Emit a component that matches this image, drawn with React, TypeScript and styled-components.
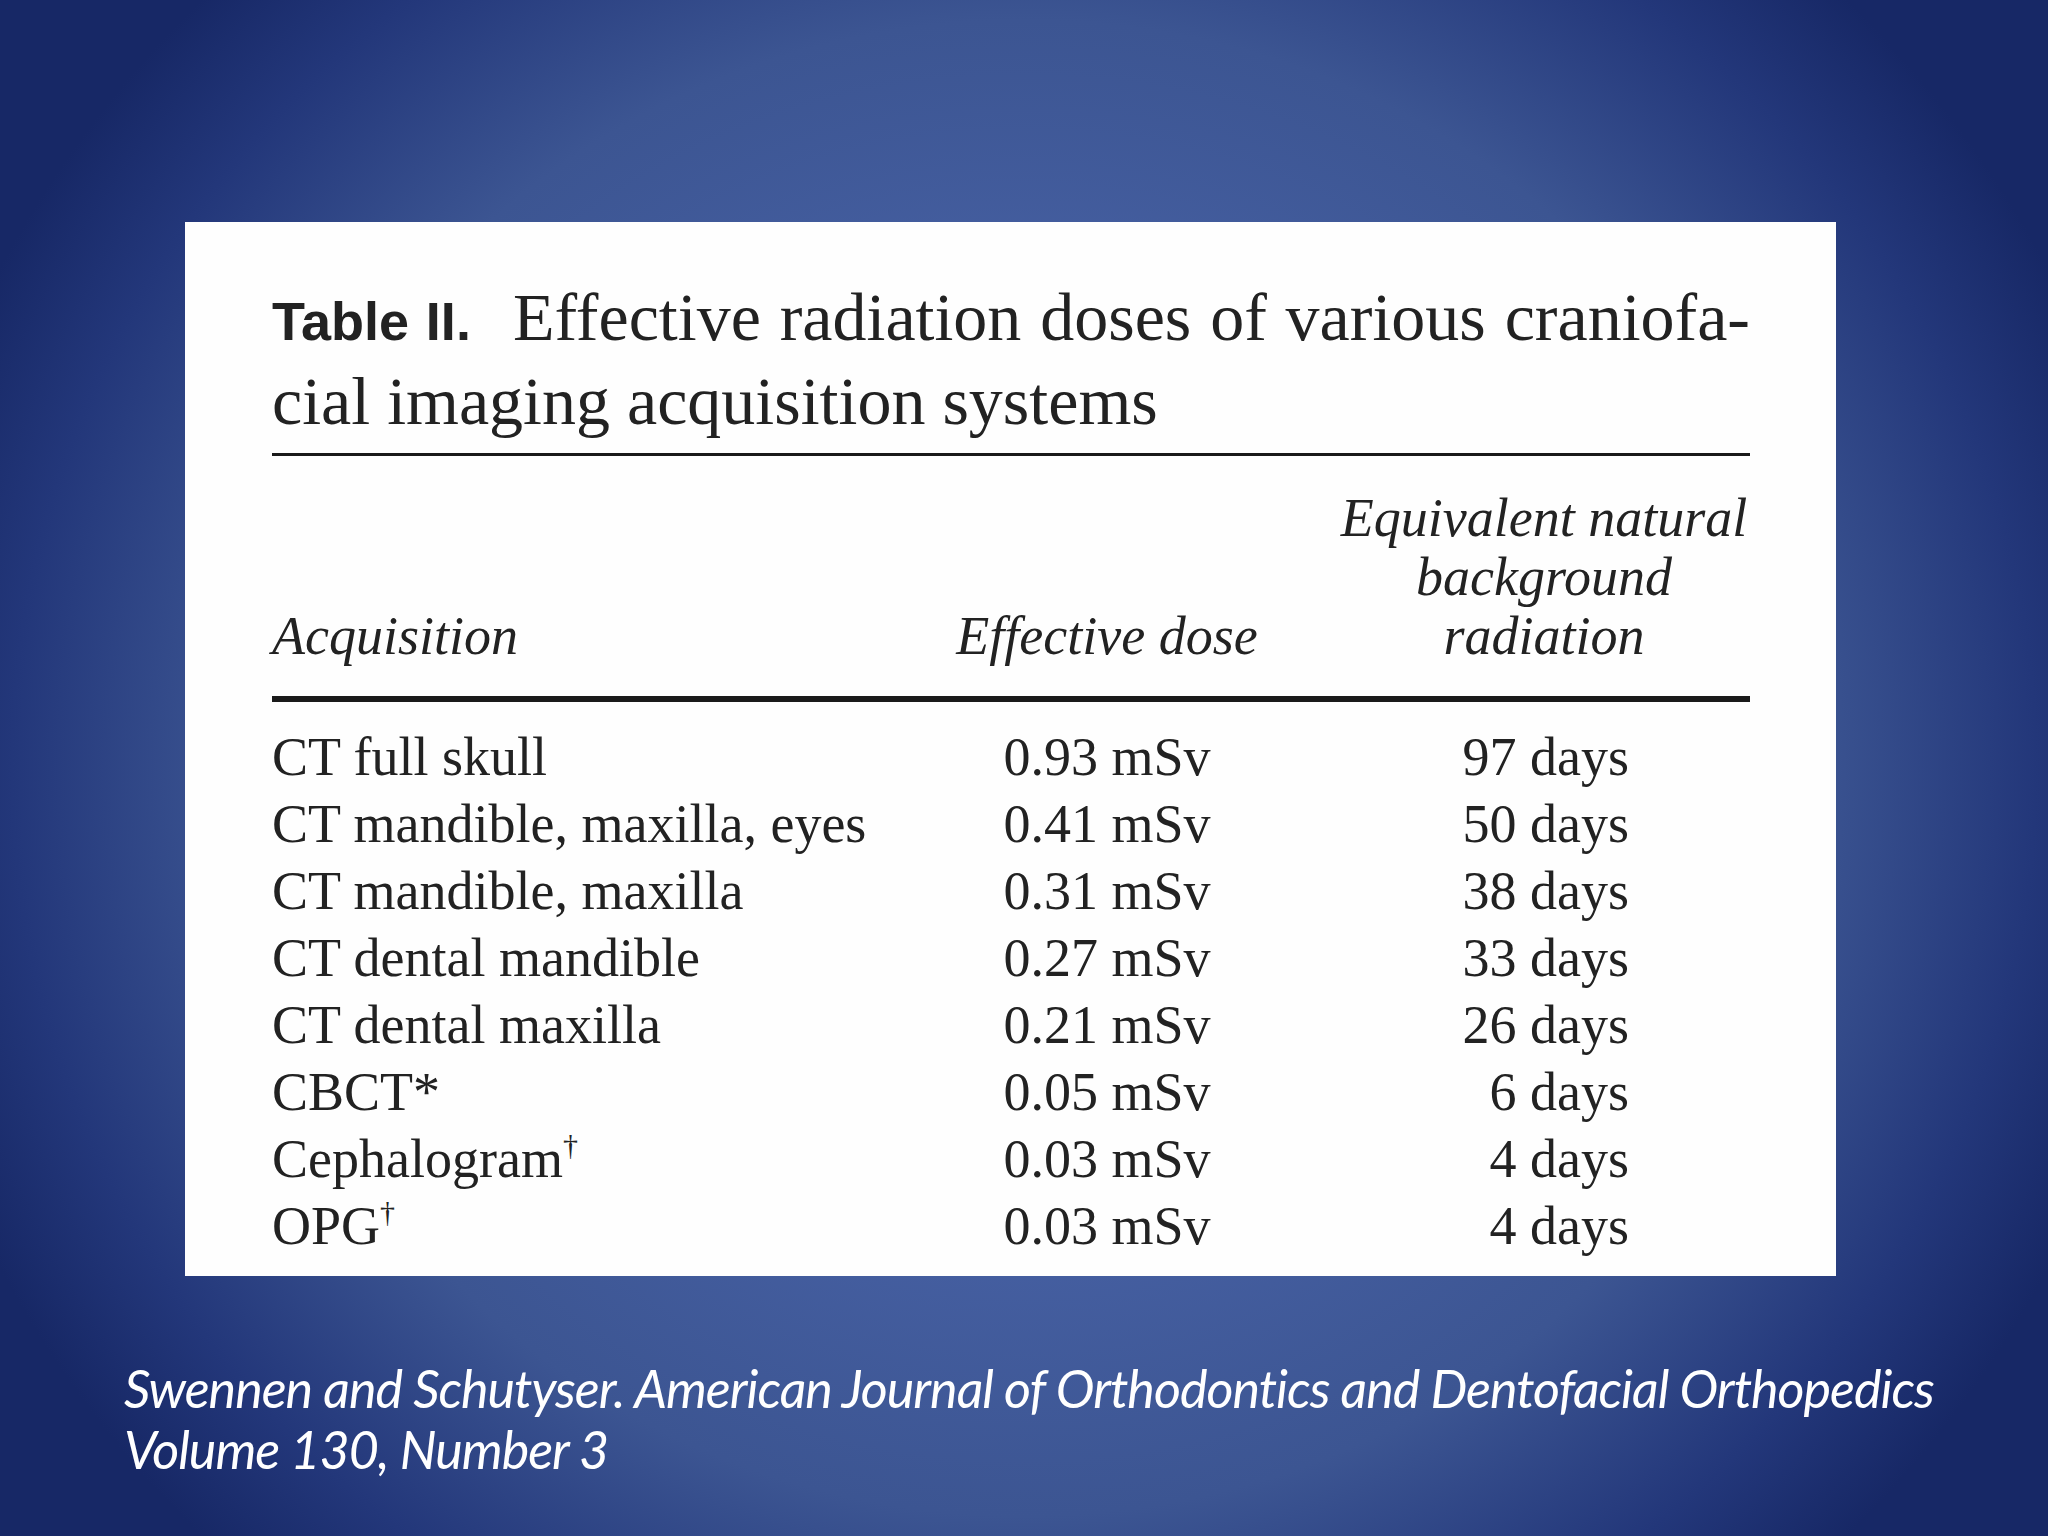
import React from "react";
import styled, { createGlobalStyle } from "styled-components";

const rows = [
  { name: "CT full skull", dose: "0.93 mSv", days: "97 days" },
  { name: "CT mandible, maxilla, eyes", dose: "0.41 mSv", days: "50 days" },
  { name: "CT mandible, maxilla", dose: "0.31 mSv", days: "38 days" },
  { name: "CT dental mandible", dose: "0.27 mSv", days: "33 days" },
  { name: "CT dental maxilla", dose: "0.21 mSv", days: "26 days" },
  { name: "CBCT*", dose: "0.05 mSv", days: "6 days" },
  { name: "Cephalogram", mark: "†", dose: "0.03 mSv", days: "4 days" },
  { name: "OPG", mark: "†", dose: "0.03 mSv", days: "4 days" },
];

const App = () => {
  return (
    <Slide>
      <GlobalStyle />
      <Card>
        <Title>
          <TitleLine justify>
            <Label>Table II.</Label>Effective radiation doses of various craniofa-
          </TitleLine>
          <TitleLine>cial imaging acquisition systems</TitleLine>
        </Title>
        <Rule />
        <Grid>
          <Head>Acquisition</Head>
          <Head align='center'>Effective dose</Head>
          <Head align='center'>
            Equivalent natural
            <br />
            background
            <br />
            radiation
          </Head>
        </Grid>
        <Rule thick />
        <Body>
          {rows.map((r) => (
            <React.Fragment key={r.name}>
              <Cell>
                {r.name}
                {r.mark && <Dagger>{r.mark}</Dagger>}
              </Cell>
              <Cell align='center'>{r.dose}</Cell>
              <Cell align='right' pad>
                {r.days}
              </Cell>
            </React.Fragment>
          ))}
        </Body>
      </Card>
      <Caption>
        Swennen and Schutyser. American Journal of Orthodontics and Dentofacial Orthopedics
        <br />
        Volume 130, Number 3
      </Caption>
    </Slide>
  );
};

export default App;

const GlobalStyle = createGlobalStyle`
  body {
    margin: 0;
    background: #1b2c6b;
  }
`;

const Slide = styled.div`
  width: 2048px;
  height: 1536px;
  box-sizing: border-box;
  padding-top: 222px;
  overflow: hidden;
  background: radial-gradient(
    ellipse 1150px 1100px at 50% 50%,
    #4d68ad 0%,
    #4862a6 35%,
    #3c5592 68%,
    #23377a 88%,
    #172866 100%
  );
`;

const Card = styled.div`
  margin-left: 185px;
  width: 1651px;
  height: 1054px;
  box-sizing: border-box;
  padding: 55px 86px 0 87px;
  background: #fefefe;
  color: #222;
  font-family: "Liberation Serif", "Times New Roman", serif;
`;

const Title = styled.div`
  font-size: 68px;
  line-height: 80px;
`;

const TitleLine = styled.div<{ justify?: boolean }>`
  text-align: ${(p) => (p.justify ? "justify" : "left")};
  text-align-last: ${(p) => (p.justify ? "justify" : "left")};
`;

const Label = styled.span`
  font-family: "Liberation Sans", Arial, sans-serif;
  font-weight: bold;
  font-size: 54px;
  margin-right: 42px;
`;

const Rule = styled.div<{ thick?: boolean }>`
  height: ${(p) => (p.thick ? "6px" : "3px")};
  background: #1a1a1a;
  margin-top: ${(p) => (p.thick ? "30px" : "12px")};
`;

const Grid = styled.div`
  display: grid;
  grid-template-columns: 604px 462px 412px;
  align-items: end;
  margin-top: 33px;
`;

const Head = styled.div<{ align?: string }>`
  font-style: italic;
  font-size: 54px;
  line-height: 59px;
  text-align: ${(p) => p.align || "left"};
`;

const Body = styled.div`
  display: grid;
  grid-template-columns: 604px 462px 412px;
  margin-top: 22px;
`;

const Cell = styled.div<{ align?: string; pad?: boolean }>`
  font-size: 54px;
  line-height: 67px;
  white-space: nowrap;
  text-align: ${(p) => p.align || "left"};
  padding-right: ${(p) => (p.pad ? "121px" : "0")};
`;

const Dagger = styled.sup`
  font-size: 30px;
  line-height: 0;
  vertical-align: 22px;
`;

const Caption = styled.div`
  margin: 82px 0 0 124px;
  font-family: Lato, "Open Sans", sans-serif;
  font-style: italic;
  font-size: 52px;
  letter-spacing: -1px;
  line-height: 61px;
  color: #ffffff;
  white-space: nowrap;
`;
